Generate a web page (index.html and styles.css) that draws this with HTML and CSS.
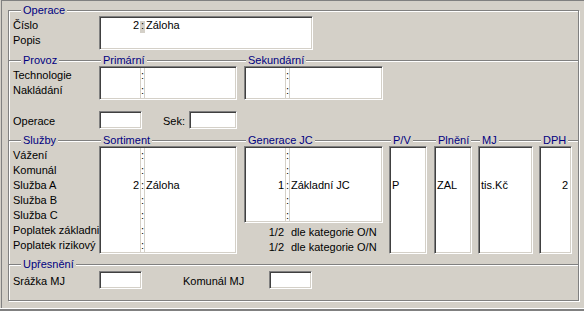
FILE: index.html
```html
<!DOCTYPE html>
<html lang="cs">
<head>
    <meta charset="UTF-8">
    <title>Operace</title>
    <link rel="stylesheet" href="styles.css">
</head>
<body>
    <div class="window">
        <div class="frame">

            <!-- Operace -->
            <div class="sec s-oper">
                <div class="col labels">
                    <span class="cap">Operace</span>
                    <div class="lines">
                        <div>Číslo</div>
                        <div>Popis</div>
                    </div>
                </div>
                <div class="col nocap">
                    <div class="box w213 h2">
                        <div class="list">
                            <div class="row"><span class="num">2</span><span class="sep sel">:</span><span class="txt">Záloha</span></div>
                        </div>
                    </div>
                </div>
            </div>

            <!-- Provoz -->
            <div class="sec s-prov">
                <div class="cols">
                    <div class="col labels">
                        <span class="cap">Provoz</span>
                        <div class="lines">
                            <div>Technologie</div>
                            <div>Nakládání</div>
                        </div>
                    </div>
                    <div class="col">
                        <span class="cap">Primární</span>
                        <div class="box w138 h2">
                            <div class="list">
                                <div class="row"><span class="num"></span><span class="sep">:</span><span class="txt"></span></div>
                                <div class="row"><span class="num"></span><span class="sep">:</span><span class="txt"></span></div>
                            </div>
                        </div>
                    </div>
                    <div class="col ml7">
                        <span class="cap">Sekundární</span>
                        <div class="box w139 h2">
                            <div class="list">
                                <div class="row"><span class="num"></span><span class="sep">:</span><span class="txt"></span></div>
                                <div class="row"><span class="num"></span><span class="sep">:</span><span class="txt"></span></div>
                            </div>
                        </div>
                    </div>
                </div>
                <div class="oprow">
                    <span class="olbl">Operace</span>
                    <div class="box edit w43"></div>
                    <span class="olbl sek">Sek:</span>
                    <div class="box edit w48"></div>
                </div>
            </div>

            <!-- Služby -->
            <div class="sec s-sluz">
                <div class="col labels">
                    <span class="cap">Služby</span>
                    <div class="lines">
                        <div>Vážení</div>
                        <div>Komunál</div>
                        <div>Služba A</div>
                        <div>Služba B</div>
                        <div>Služba C</div>
                        <div>Poplatek základni</div>
                        <div>Poplatek rizikový</div>
                    </div>
                </div>
                <div class="col">
                    <span class="cap">Sortiment</span>
                    <div class="box w138 h7">
                        <div class="list">
                            <div class="row"><span class="num"></span><span class="sep">:</span><span class="txt"></span></div>
                            <div class="row"><span class="num"></span><span class="sep">:</span><span class="txt"></span></div>
                            <div class="row"><span class="num">2</span><span class="sep">:</span><span class="txt">Záloha</span></div>
                            <div class="row"><span class="num"></span><span class="sep">:</span><span class="txt"></span></div>
                            <div class="row"><span class="num"></span><span class="sep">:</span><span class="txt"></span></div>
                            <div class="row"><span class="num"></span><span class="sep">:</span><span class="txt"></span></div>
                            <div class="row"><span class="num"></span><span class="sep">:</span><span class="txt"></span></div>
                        </div>
                    </div>
                </div>
                <div class="col ml7">
                    <span class="cap">Generace JC</span>
                    <div class="box w139 h5">
                        <div class="list">
                            <div class="row"><span class="num"></span><span class="sep">:</span><span class="txt"></span></div>
                            <div class="row"><span class="num"></span><span class="sep">:</span><span class="txt"></span></div>
                            <div class="row"><span class="num">1</span><span class="sep">:</span><span class="txt">Základní JC</span></div>
                            <div class="row"><span class="num"></span><span class="sep">:</span><span class="txt"></span></div>
                            <div class="row"><span class="num"></span><span class="sep">:</span><span class="txt"></span></div>
                        </div>
                    </div>
                    <div class="sub">
                        <div class="row"><span class="num">1/2</span><span class="sep blank"></span><span class="txt">dle kategorie O/N</span></div>
                        <div class="row"><span class="num">1/2</span><span class="sep blank"></span><span class="txt">dle kategorie O/N</span></div>
                    </div>
                </div>
                <div class="col ml6">
                    <span class="cap">P/V</span>
                    <div class="box w38 h7">
                        <div class="list">
                            <div class="row"></div>
                            <div class="row"></div>
                            <div class="row"><span class="one">P</span></div>
                        </div>
                    </div>
                </div>
                <div class="col ml7">
                    <span class="cap">Plnění</span>
                    <div class="box w38 h7">
                        <div class="list">
                            <div class="row"></div>
                            <div class="row"></div>
                            <div class="row"><span class="one">ZAL</span></div>
                        </div>
                    </div>
                </div>
                <div class="col ml6">
                    <span class="cap">MJ</span>
                    <div class="box w55 h7">
                        <div class="list">
                            <div class="row"></div>
                            <div class="row"></div>
                            <div class="row"><span class="one">tis.Kč</span></div>
                        </div>
                    </div>
                </div>
                <div class="col ml6">
                    <span class="cap">DPH</span>
                    <div class="box w33 h7">
                        <div class="list">
                            <div class="row"></div>
                            <div class="row"></div>
                            <div class="row"><span class="one right">2</span></div>
                        </div>
                    </div>
                </div>
            </div>

            <!-- Upřesnění -->
            <div class="sec s-upr">
                <span class="cap">Upřesnění</span>
                <div class="oprow top1">
                    <span class="olbl">Srážka MJ</span>
                    <div class="box edit w43"></div>
                    <span class="olbl kom">Komunál MJ</span>
                    <div class="box edit w43"></div>
                </div>
            </div>

        </div>
    </div>
    <div class="statusbar"></div>
</body>
</html>
```

FILE: styles.css
```css
body {
    margin: 0;
    background-color: #d4d0c8;
    font-family: "Liberation Sans", Arial, sans-serif;
    font-size: 11px;
    color: #000;
}

.window {
    margin-left: 1px;
    height: 307px;
    border-top: 1px solid #808080;
    border-left: 1px solid #808080;
}

.statusbar {
    height: 2px;
    background-color: #808080;
    border-top: 1px solid #fff;
}

/* etched group frame */
.frame {
    margin: 9px 0 0 6px;
    width: 571px;
    height: 291px;
    box-sizing: border-box;
    border: 1px solid #808080;
    box-shadow: inset 1px 1px #fff, 1px 1px #fff;
    display: flex;
    flex-direction: column;
}

.sec {
    display: flex;
    flex-shrink: 0;
    padding-left: 4px;
    box-sizing: border-box;
}

.sec + .sec {
    border-top: 1px solid #808080;
    box-shadow: inset 0 1px #fff;
}

.s-oper { height: 49px; }
.s-prov { height: 80px; flex-direction: column; }
.s-sluz { height: 124px; }
.s-upr { flex: 1; flex-direction: column; align-items: flex-start; }

.cols {
    display: flex;
}

.col {
    display: flex;
    flex-direction: column;
    align-items: flex-start;
}

.nocap { margin-top: 5px; }
.ml6 { margin-left: 6px; }
.ml7 { margin-left: 7px; }

.cap {
    height: 13px;
    line-height: 13px;
    margin: -7px 0 -1px 2px;
    padding: 0 2px;
    background-color: #d4d0c8;
    color: #000080;
    white-space: nowrap;
}

.labels {
    width: 86px;
    flex-shrink: 0;
}

.labels .cap,
.s-upr .cap {
    margin-left: 8px;
}

.lines {
    padding-top: 2px;
}

.lines div {
    height: 15px;
    line-height: 15px;
    white-space: nowrap;
}

/* sunken white boxes */
.box {
    box-sizing: border-box;
    border: 1px solid;
    border-color: #808080 #fff #fff #808080;
    padding: 1px;
    background-color: #fff;
    box-shadow: inset 1px 1px #404040, inset -1px -1px #d4d0c8;
    flex-shrink: 0;
}

.list {
    height: 100%;
    overflow: hidden;
}

.w33 { width: 33px; }
.w38 { width: 38px; }
.w43 { width: 43px; }
.w48 { width: 48px; }
.w55 { width: 55px; }
.w138 { width: 138px; }
.w139 { width: 139px; }
.w213 { width: 214px; }

.h2 { height: 34px; }
.h5 { height: 77px; }
.h7 { height: 108px; }

.edit { height: 18px; }

.row {
    display: flex;
    height: 15px;
    line-height: 15px;
    white-space: nowrap;
}

.num {
    width: 39px;
    flex-shrink: 0;
    box-sizing: border-box;
    padding-right: 1px;
    text-align: right;
}

.sep {
    width: 5px;
    flex-shrink: 0;
    box-sizing: border-box;
    border-left: 1px solid #d4d0c8;
    border-right: 1px solid #d4d0c8;
    text-align: center;
}

.sep.sel {
    border-color: transparent;
    background: linear-gradient(#fff 3px, #d4d0c8 3px, #d4d0c8 15px);
}

.sep.blank {
    border-color: transparent;
}

.txt {
    flex: 1;
    padding-left: 1px;
    overflow: hidden;
}

.one {
    flex: 1;
    padding: 0 1px;
}

.one.right {
    text-align: right;
    padding-right: 2px;
}

.sub {
    margin-top: 2px;
    padding-left: 2px;
}

.oprow {
    display: flex;
    align-items: flex-start;
    margin-top: 11px;
}

.oprow.top1 {
    margin-top: 1px;
}

.olbl {
    width: 86px;
    flex-shrink: 0;
    line-height: 18px;
    padding-top: 1px;
    white-space: nowrap;
}

.olbl.sek {
    width: 26px;
    margin-left: 21px;
}

.olbl.kom {
    margin-left: 41px;
}
```
